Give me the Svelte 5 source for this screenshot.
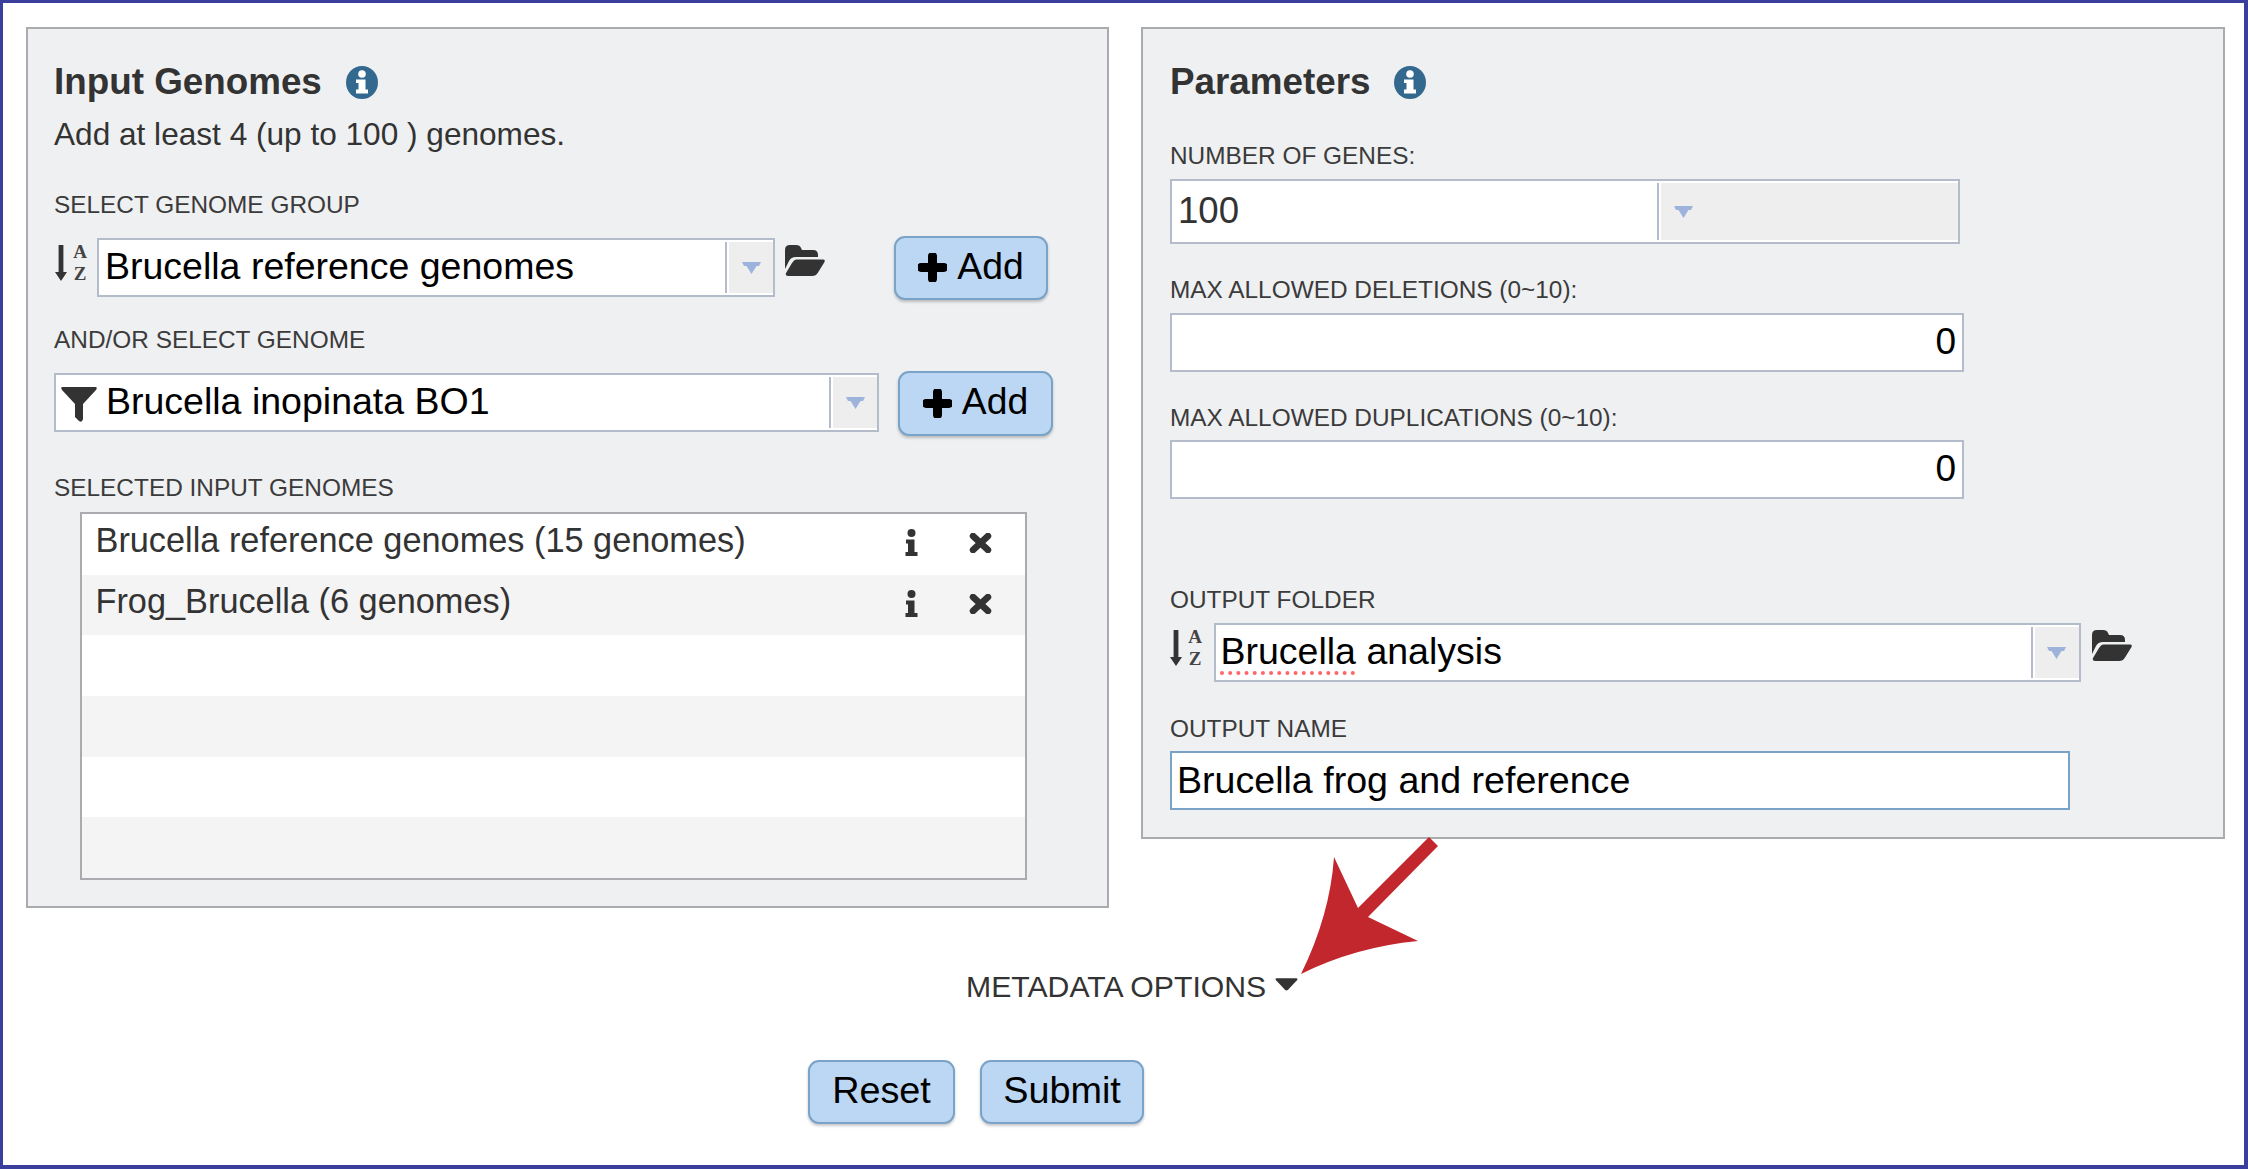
<script>
  const rows = [
    { name: 'Brucella reference genomes (15 genomes)', filled: true },
    { name: 'Frog_Brucella (6 genomes)', filled: true },
    { name: '', filled: false },
    { name: '', filled: false },
    { name: '', filled: false },
    { name: '', filled: false }
  ];
</script>

{#snippet info()}
  <svg class="info" viewBox="0 0 32 33" aria-hidden="true">
    <ellipse cx="16" cy="16.5" rx="16" ry="16.5" fill="#33698f" />
    <circle cx="16" cy="8" r="3.8" fill="#fff" />
    <path d="M10 13.5H19.5V23.5H22V27.5H10V23.5H12.5V17H10Z" fill="#fff" />
  </svg>
{/snippet}

{#snippet sort()}
  <span class="sort" aria-hidden="true">
    <svg class="sort-arrow" viewBox="0 0 12 36">
      <path d="M3.6 0H8.4V27H12L6 36L0 27H3.6Z" fill="#333" />
    </svg>
    <span class="az"><span>A</span><span>Z</span></span>
  </span>
{/snippet}

{#snippet folder()}
  <svg class="folder" viewBox="0 0 40 31" aria-hidden="true">
    <path d="M0 5Q0 0 5 0H11Q15 0 16 3L17 5H28Q33 5 33 10V12H11Q6 12 4 16L0 24Z" fill="#333" />
    <path d="M11 14.5H38Q40.5 14.5 39.5 17L33 27.5Q31 31 27 31H3Q0 31 1 28L7 18Q9 14.5 11 14.5Z" fill="#333" />
  </svg>
{/snippet}

{#snippet caret()}
  <svg class="caret" viewBox="0 0 19 12" aria-hidden="true">
    <path d="M0 0H19L17 4H14.5L9.5 12L4.5 4H2Z" fill="#9db3dc" />
  </svg>
{/snippet}

{#snippet plus()}
  <svg class="plus" viewBox="0 0 29 29" aria-hidden="true">
    <path d="M14.5 3V26M3 14.5H26" stroke="#000" stroke-width="9" stroke-linecap="round" />
  </svg>
{/snippet}

<div class="frame">
  <div class="panels">
    <section class="panel left">
      <h2>Input Genomes {@render info()}</h2>
      <p class="hint">Add at least 4 (up to 100 ) genomes.</p>

      <div class="label l-group">SELECT GENOME GROUP</div>
      <div class="row group-row">
        {@render sort()}
        <div class="select group-select">
          <span class="value">Brucella reference genomes</span>
          <span class="drop">{@render caret()}</span>
        </div>
        <span class="folder-slot">{@render folder()}</span>
        <button class="btn add add-one">{@render plus()}Add</button>
      </div>

      <div class="label l-genome">AND/OR SELECT GENOME</div>
      <div class="row genome-row">
        <div class="select genome-select">
          <svg class="funnel" viewBox="0 0 36 35" aria-hidden="true">
            <path d="M1 0H35Q36.5 1 35 3L22 17V32Q21 36 18 34L14 30V17L1 3Q-.5 1 1 0Z" fill="#333" />
          </svg>
          <span class="value">Brucella inopinata BO1</span>
          <span class="drop">{@render caret()}</span>
        </div>
        <button class="btn add add-two">{@render plus()}Add</button>
      </div>

      <div class="label l-selected">SELECTED INPUT GENOMES</div>
      <div class="list">
        {#each rows as row}
          <div class="list-row">
            <span class="list-name">{row.name}</span>
            {#if row.filled}
              <svg class="row-i" viewBox="0 0 13 27" aria-hidden="true">
                <circle cx="6.5" cy="4" r="4" fill="#333" />
                <path d="M1 10.5H9.5V23H12.5V27H.5V23H3V14.5H1Z" fill="#333" />
              </svg>
              <svg class="row-x" viewBox="0 0 23 20" aria-hidden="true">
                <path d="M4 3L19 17M19 3L4 17" stroke="#333" stroke-width="6.5" stroke-linecap="round" />
              </svg>
            {/if}
          </div>
        {/each}
      </div>
    </section>

    <section class="panel right">
      <h2>Parameters {@render info()}</h2>

      <div class="label l-num">NUMBER OF GENES:</div>
      <div class="select num-select">
        <span class="value num-value">100</span>
        <span class="drop wide">{@render caret()}</span>
      </div>

      <div class="label l-max">MAX ALLOWED DELETIONS (0~10):</div>
      <input class="field num-field first" value="0" readonly />

      <div class="label l-max">MAX ALLOWED DUPLICATIONS (0~10):</div>
      <input class="field num-field second" value="0" readonly />

      <div class="label l-folder">OUTPUT FOLDER</div>
      <div class="row folder-row">
        {@render sort()}
        <div class="select out-select">
          <span class="value out-value"><span class="squiggle">Brucella</span> analysis</span>
          <span class="drop">{@render caret()}</span>
        </div>
        <span class="folder-slot">{@render folder()}</span>
      </div>

      <div class="label l-name">OUTPUT NAME</div>
      <input class="field name-field" value="Brucella frog and reference" readonly />
    </section>
  </div>

  <div class="meta">
    <span>METADATA OPTIONS</span>
    <svg class="meta-caret" viewBox="0 0 22 12" aria-hidden="true">
      <path d="M2 0H20Q22.5 0 21 2L12.5 11Q11 12.5 9.5 11L1 2Q-.5 0 2 0Z" fill="#333" />
    </svg>
  </div>

  <div class="actions">
    <button class="btn reset">Reset</button>
    <button class="btn submit">Submit</button>
  </div>

  <svg class="pointer" viewBox="0 0 140 142" aria-hidden="true">
    <path d="M129 2L138 11L68 82L118 106Q55 112 1 139Q30 80 34 22L58 73Z" fill="#c1272d" />
  </svg>
</div>

<style>
  :global(body) {
    margin: 0;
    background: #fff;
  }

  .frame {
    position: relative;
    box-sizing: border-box;
    width: 2248px;
    height: 1169px;
    border: 3px solid #3a3f9e;
    border-right-width: 4px;
    border-bottom-width: 4px;
    padding: 24px 0 0 23px;
    background: #fff;
    font-family: "Liberation Sans", Arial, sans-serif;
    color: #333;
    overflow: hidden;
  }

  .panels {
    display: flex;
    align-items: flex-start;
    gap: 32px;
  }

  .panel {
    box-sizing: border-box;
    border: 2px solid #aaabae;
    background: #eff0f2;
    padding: 33px 26px 0;
  }

  .left {
    width: 1083px;
    height: 881px;
  }

  .right {
    width: 1084px;
    height: 812px;
    padding-left: 27px;
  }

  h2 {
    display: flex;
    align-items: center;
    gap: 24px;
    margin: 0;
    height: 40px;
    font-size: 36.8px;
    line-height: 40px;
    font-weight: 700;
    color: #333;
  }

  .info {
    width: 32px;
    height: 33px;
    flex: none;
  }

  .hint {
    margin: 15px 0 0;
    font-size: 31.6px;
    line-height: 35px;
    height: 36px;
  }

  .label {
    height: 28px;
    font-size: 24.4px;
    line-height: 29px;
    color: #3b3b3b;
    white-space: nowrap;
  }

  .l-group { margin-top: 37px; }
  .l-genome { margin-top: 25px; }
  .l-selected { margin-top: 37px; }
  .l-num { margin-top: 39px; }
  .l-max { margin-top: 31px; }
  .l-folder { margin-top: 86px; }
  .l-name { margin-top: 32px; }

  .row {
    display: flex;
    align-items: center;
  }

  .group-row {
    height: 64px;
    margin-top: 18px;
  }

  .genome-row {
    height: 65px;
    margin-top: 18px;
  }

  .folder-row {
    height: 59px;
    margin-top: 10px;
  }

  .group-row .select,
  .genome-row .select {
    align-self: flex-start;
    margin-top: 2px;
  }

  .sort {
    display: flex;
    gap: 6px;
    width: 32px;
    height: 37px;
    flex: none;
    margin-left: 1px;
    margin-right: 10px;
    align-self: flex-start;
  }

  .group-row .sort { margin-top: 9px; }
  .folder-row .sort { margin-top: 7px; margin-left: 0; margin-right: 11.5px; }

  .sort-arrow {
    width: 12px;
    height: 36px;
    flex: none;
  }

  .az {
    display: flex;
    flex-direction: column;
    margin-top: -4.5px;
    font-family: "Liberation Serif", serif;
    font-weight: 700;
    font-size: 19px;
    line-height: 22px;
    color: #444;
    text-align: center;
    width: 14px;
  }

  .select {
    box-sizing: border-box;
    display: flex;
    align-items: center;
    height: 59px;
    border: 2px solid #b4bccb;
    background: #fff;
    color: #000;
    font-size: 37.5px;
  }

  .value {
    flex: 1;
    white-space: nowrap;
    padding-bottom: 3px;
  }

  .drop {
    box-sizing: border-box;
    flex: none;
    display: flex;
    align-items: center;
    justify-content: center;
    align-self: stretch;
    width: 48px;
    margin: 2px 0;
    padding-left: 2px;
    border-left: 2px solid #b4bccb;
    background: linear-gradient(#eee, #eee) no-repeat 2px 0 / 44px 100%;
  }

  .caret {
    width: 19px;
    height: 12px;
  }

  .group-select {
    width: 678px;
  }

  .group-select .value {
    padding-left: 6px;
  }

  .folder-slot {
    flex: none;
    align-self: flex-start;
    margin-left: 10px;
  }

  .group-row .folder-slot { margin-top: 9px; }
  .folder-row .folder-slot { margin-top: 7px; margin-left: 11px; }

  .folder {
    display: block;
    width: 40px;
    height: 31px;
  }

  .btn {
    box-sizing: border-box;
    height: 64px;
    padding: 0 0 3px;
    border: 2px solid #7aa3c8;
    border-radius: 11px;
    background: #bcd7f3;
    box-shadow: 0 2px 3px rgba(0, 0, 0, 0.22);
    color: #000;
    font-family: inherit;
    font-size: 37.8px;
    line-height: 1;
    display: inline-flex;
    align-items: center;
    justify-content: center;
  }

  .add {
    width: 154px;
    gap: 10px;
    font-size: 37.3px;
  }

  .add-one { margin-left: 69px; }
  .add-two { margin-left: 19px; height: 65px; width: 155px; }

  .plus {
    width: 29px;
    height: 29px;
    flex: none;
    margin-top: 2px;
  }

  .genome-select {
    width: 825px;
  }

  .funnel {
    width: 36px;
    height: 35px;
    flex: none;
    margin: 4px 9px 0 5px;
  }

  .list {
    box-sizing: border-box;
    width: 947px;
    height: 368px;
    margin: 11px 0 0 26px;
    border: 2px solid #aaabae;
  }

  .list-row {
    box-sizing: border-box;
    display: flex;
    align-items: flex-start;
    height: 60.67px;
    padding-left: 13.5px;
    background: #fff;
  }

  .list-row:nth-child(even) {
    background: #f4f4f5;
  }

  .list-name {
    flex: 1;
    font-size: 34.3px;
    line-height: 52px;
    color: #333;
  }

  .row-i {
    width: 13px;
    height: 27px;
    flex: none;
    margin: 15px 51.5px 0 0;
  }

  .row-x {
    width: 23px;
    height: 20px;
    flex: none;
    margin: 19px 33px 0 0;
  }

  .num-select {
    width: 790px;
    height: 65px;
    margin-top: 10px;
  }

  .num-value {
    flex: none;
    width: 485px;
    padding-left: 6px;
    padding-bottom: 1px;
    box-sizing: border-box;
    color: #333;
    font-size: 36.6px;
  }

  .drop.wide {
    flex: 1;
    width: auto;
    justify-content: flex-start;
    padding-left: 15px;
    background-size: calc(100% - 2px) 100%;
  }

  .field {
    box-sizing: border-box;
    display: block;
    width: 794px;
    height: 59px;
    margin: 10px 0 0;
    border: 2px solid #b4bccb;
    border-radius: 0;
    outline: none;
    background: #fff;
    color: #000;
    font-family: inherit;
    font-size: 37px;
    padding: 0 6px 2px 5px;
  }

  .num-field {
    text-align: right;
  }

  .num-field.second {
    margin-top: 9px;
  }

  .out-select {
    width: 867px;
    flex: none;
  }

  .out-value {
    padding-left: 5px;
  }

  .squiggle {
    text-decoration: underline dotted #f66 4px;
    text-underline-offset: 8px;
  }

  .name-field {
    width: 900px;
    height: 59px;
    margin-top: 9px;
    border-color: #7aa3c8;
    font-size: 37.6px;
    padding-bottom: 0;
  }

  .meta {
    position: absolute;
    left: 963px;
    top: 965px;
    display: flex;
    align-items: flex-start;
    font-size: 30.2px;
    line-height: 38px;
    color: #333;
  }

  .meta-caret {
    width: 23px;
    height: 13px;
    margin: 10px 0 0 9px;
  }

  .actions {
    position: absolute;
    left: 805px;
    top: 1057px;
    display: flex;
    gap: 25px;
  }

  .reset { width: 147px; }
  .submit { width: 164px; }

  .pointer {
    position: absolute;
    left: 1297px;
    top: 832px;
    width: 140px;
    height: 142px;
  }
</style>
